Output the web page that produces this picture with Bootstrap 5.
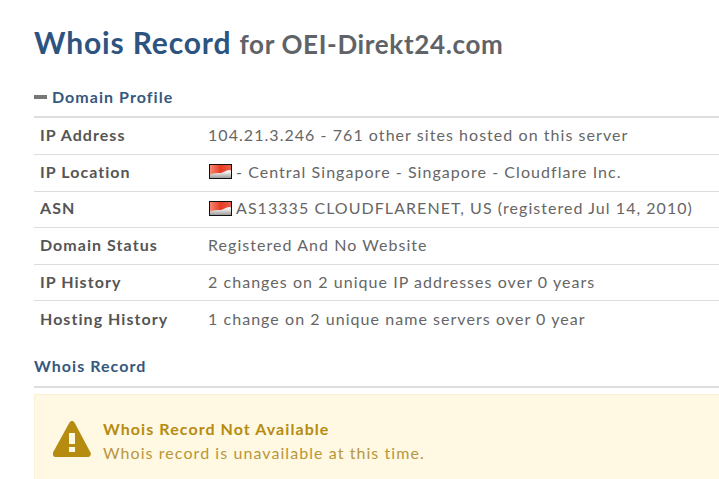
<!DOCTYPE html>
<html lang="en">
<head>
<meta charset="utf-8">
<title>Whois Record</title>
<link href="https://cdn.jsdelivr.net/npm/bootstrap@5.3.0/dist/css/bootstrap.min.css" rel="stylesheet">
<style>
html, body { height: 479px; overflow: hidden; }
body { font-family: Lato, "Liberation Sans", sans-serif; color: #555; background: #fff; }
.page-wrap { padding: 24px 0 0 34px; }
.page-title { font-size: 30px; font-weight: 700; line-height: 36px; margin: 0 0 25px; color: #2d5480; letter-spacing: .85px; }
.page-title small { font-size: 26px; font-weight: 700; color: #5f6368; letter-spacing: .65px; }
.sect-head { font-size: 16px; font-weight: 700; color: #35587e; letter-spacing: 1.05px; line-height: 20px; }
.minus-bar { width: 13px; height: 4px; background: #777; margin-right: 5px; }
.profile-list { border-top: 2px solid #ddd; margin-top: 9.4px; }
.profile-row { height: 36.6px; padding-bottom: 2px; border-bottom: 1px solid #ddd; font-size: 16px; letter-spacing: 1.05px; color: #666; padding-left: 6px; }
.profile-row:last-child { border-bottom: 0; }
.profile-key { width: 168px; font-weight: 700; color: #555; flex: none; }
.flag-ic { width: 23px; height: 15px; flex: none; margin-right: 4px; margin-left: 1px; display: block; }
.rec-head { margin-top: 18.4px; }
.rec-rule { height: 2px; background: #ddd; margin-top: 10px; }
.warn-box { background: #fff8e3; border: 1px solid #faf1d8; border-right: 0; margin-top: 6px; height: 90px; padding: 22px 0 0 18px; color: #b8963a; font-size: 16px; letter-spacing: 1.07px; line-height: 24px; }
.warn-ic { width: 38px; height: 36px; flex: none; margin-right: 12px; margin-top: 4px; }
.warn-title { font-weight: 700; color: #b58c10; }
</style>
</head>
<body>
<main class="page-wrap">
    <h1 class="page-title">Whois Record <small>for OEI-Direkt24.com</small></h1>

    <div class="sect-head d-flex align-items-center">
        <span class="minus-bar"></span>Domain Profile
    </div>
    <div class="profile-list">
        <div class="profile-row d-flex align-items-center"><span class="profile-key">IP Address</span><span>104.21.3.246 - 761 other sites hosted on this server</span></div>
        <div class="profile-row d-flex align-items-center"><span class="profile-key">IP Location</span>
            <svg class="flag-ic" viewBox="0 0 23 15"><defs><linearGradient id="fw" x1="0" y1="0" x2="0" y2="1"><stop offset="0" stop-color="#fdf6f2"/><stop offset=".55" stop-color="#f1eeec"/><stop offset="1" stop-color="#9c9c9c"/></linearGradient><linearGradient id="fr" x1="0" y1="0" x2="1" y2="0"><stop offset="0" stop-color="#f58a72"/><stop offset=".5" stop-color="#ea3a22"/><stop offset="1" stop-color="#e5604c"/></linearGradient></defs><rect width="23" height="15" fill="#111"/><rect x="1" y="1" width="21" height="13" fill="url(#fw)"/><path d="M1 1h21v5.500c-4-2-7 3-12 2.500-4-.4-6 .5-9 1.500z" fill="url(#fr)"/></svg>
            <span>- Central Singapore - Singapore - Cloudflare Inc.</span></div>
        <div class="profile-row d-flex align-items-center"><span class="profile-key">ASN</span>
            <svg class="flag-ic" viewBox="0 0 23 15"><rect width="23" height="15" fill="#111"/><rect x="1" y="1" width="21" height="13" fill="url(#fw)"/><path d="M1 1h21v5.500c-4-2-7 3-12 2.500-4-.4-6 .5-9 1.500z" fill="url(#fr)"/></svg>
            <span>AS13335 CLOUDFLARENET, US (registered Jul 14, 2010)</span></div>
        <div class="profile-row d-flex align-items-center"><span class="profile-key">Domain Status</span><span>Registered And No Website</span></div>
        <div class="profile-row d-flex align-items-center"><span class="profile-key">IP History</span><span>2 changes on 2 unique IP addresses over 0 years</span></div>
        <div class="profile-row d-flex align-items-center"><span class="profile-key">Hosting History</span><span>1 change on 2 unique name servers over 0 year</span></div>
    </div>

    <div class="sect-head rec-head">Whois Record</div>
    <div class="rec-rule"></div>
    <div class="warn-box d-flex">
        <svg class="warn-ic" viewBox="0 0 38 36"><path d="M19 0c1 0 1.900.6 2.500 1.600l16 30c1 1.900-.2 4.400-2.500 4.400H2.500C.2 36-1 33.500 0 31.600l16.500-30C17.100.6 18 0 19 0z" fill="#b58c10"/><rect x="16" y="12" width="6" height="11" fill="#fff8e3"/><rect x="16" y="26" width="6" height="5" fill="#fff8e3"/></svg>
        <div>
            <div class="warn-title">Whois Record Not Available</div>
            <div>Whois record is unavailable at this time.</div>
        </div>
    </div>
</main>
<script src="https://cdn.jsdelivr.net/npm/bootstrap@5.3.0/dist/js/bootstrap.bundle.min.js"></script>
</body>
</html>
